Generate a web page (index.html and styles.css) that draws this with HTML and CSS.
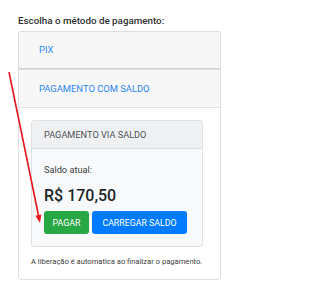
FILE: index.html
```html
<!DOCTYPE html>
<html lang="pt-BR">
<head>
<meta charset="utf-8">
<title>Pagamento</title>
<link rel="stylesheet" href="styles.css">
</head>
<body>
<div class="page">
  <div class="title">Escolha o método de pagamento:</div>
  <div class="accordion">
    <div class="acc-card acc-first">
      <div class="acc-header"><span class="acc-link">PIX</span></div>
    </div>
    <div class="acc-card acc-last">
      <div class="acc-header"><span class="acc-link">PAGAMENTO COM SALDO</span></div>
      <div class="acc-body">
        <div class="inner-card">
          <div class="inner-header">PAGAMENTO VIA SALDO</div>
          <div class="inner-body">
            <div class="saldo-label">Saldo atual:</div>
            <div class="saldo-value">R$ 170,50</div>
            <div class="buttons">
              <span class="btn btn-green">PAGAR</span>
              <span class="btn btn-blue">CARREGAR SALDO</span>
            </div>
          </div>
        </div>
        <div class="note">A liberação é automatica ao finalizar o pagamento.</div>
      </div>
    </div>
  </div>
  <svg class="arrow" width="241" height="290" viewBox="0 0 241 290">
    <line x1="9" y1="72" x2="38.6" y2="216" stroke="#e8151b" stroke-width="1.6"/>
    <polygon points="40,223 41.3,214.6 35.5,215.8" fill="#e8151b"/>
  </svg>
</div>
</body>
</html>
```

FILE: styles.css
```css
html, body {
  margin: 0;
  padding: 0;
  background: #ffffff;
}
body {
  font-family: Roboto, "Liberation Sans", Arial, sans-serif;
  color: #212529;
}
.page {
  position: relative;
  width: 241px;
  height: 290px;
  padding: 14px 20px 0 18px;
  box-sizing: border-box;
}
.title {
  font-size: 9.8px;
  font-weight: 500;
  line-height: 14px;
  height: 14px;
  color: #2e2e2e;
  margin-bottom: 3px;
}
.accordion {
  width: 203px;
}
.acc-card {
  border: 1px solid #dedede;
  background: #ffffff;
}
.acc-first {
  border-bottom: 0;
  border-radius: 3px 3px 0 0;
}
.acc-last {
  border-radius: 0 0 3px 3px;
}
.acc-header {
  background: #f7f7f7;
  border-bottom: 1px solid #d4d4d4;
  height: 37px;
  display: flex;
  align-items: center;
  padding-left: 20px;
  box-sizing: border-box;
}
.acc-last .acc-header {
  height: 38px;
  border-bottom-color: #e2e2e2;
}
.acc-link {
  font-size: 9.4px;
  color: #2b86f5;
  line-height: 14px;
}
.acc-body {
  padding: 12px 17px 12px 12px;
}
.inner-card {
  border: 1px solid #e0e1e3;
  border-radius: 3px;
  background: #f8f9fa;
  overflow: hidden;
}
.inner-header {
  height: 28px;
  box-sizing: border-box;
  background: #eff0f2;
  border-bottom: 1px solid #dcdee0;
  display: flex;
  align-items: center;
  padding-left: 12px;
  font-size: 9.2px;
  color: #4f5357;
}
.inner-body {
  padding: 14px 12px 12px 12px;
}
.saldo-label {
  font-size: 9.2px;
  line-height: 14px;
  color: #3a3d40;
  margin-bottom: 9px;
}
.saldo-value {
  font-size: 16px;
  line-height: 19px;
  font-weight: 500;
  color: #212529;
  margin-bottom: 6px;
}
.buttons {
  display: flex;
  gap: 3px;
}
.btn {
  display: flex;
  align-items: center;
  justify-content: center;
  height: 23px;
  padding: 0 6px;
  border-radius: 3px;
  font-size: 8.8px;
  color: #ffffff;
  box-sizing: border-box;
}
.btn-green {
  background: #28a745;
  width: 45px;
}
.btn-blue {
  background: #007bff;
  width: 95px;
}
.note {
  margin-top: 9px;
  font-size: 7.6px;
  line-height: 11px;
  color: #3c3c3c;
}
.arrow {
  position: absolute;
  left: 0;
  top: 0;
  pointer-events: none;
}
```
